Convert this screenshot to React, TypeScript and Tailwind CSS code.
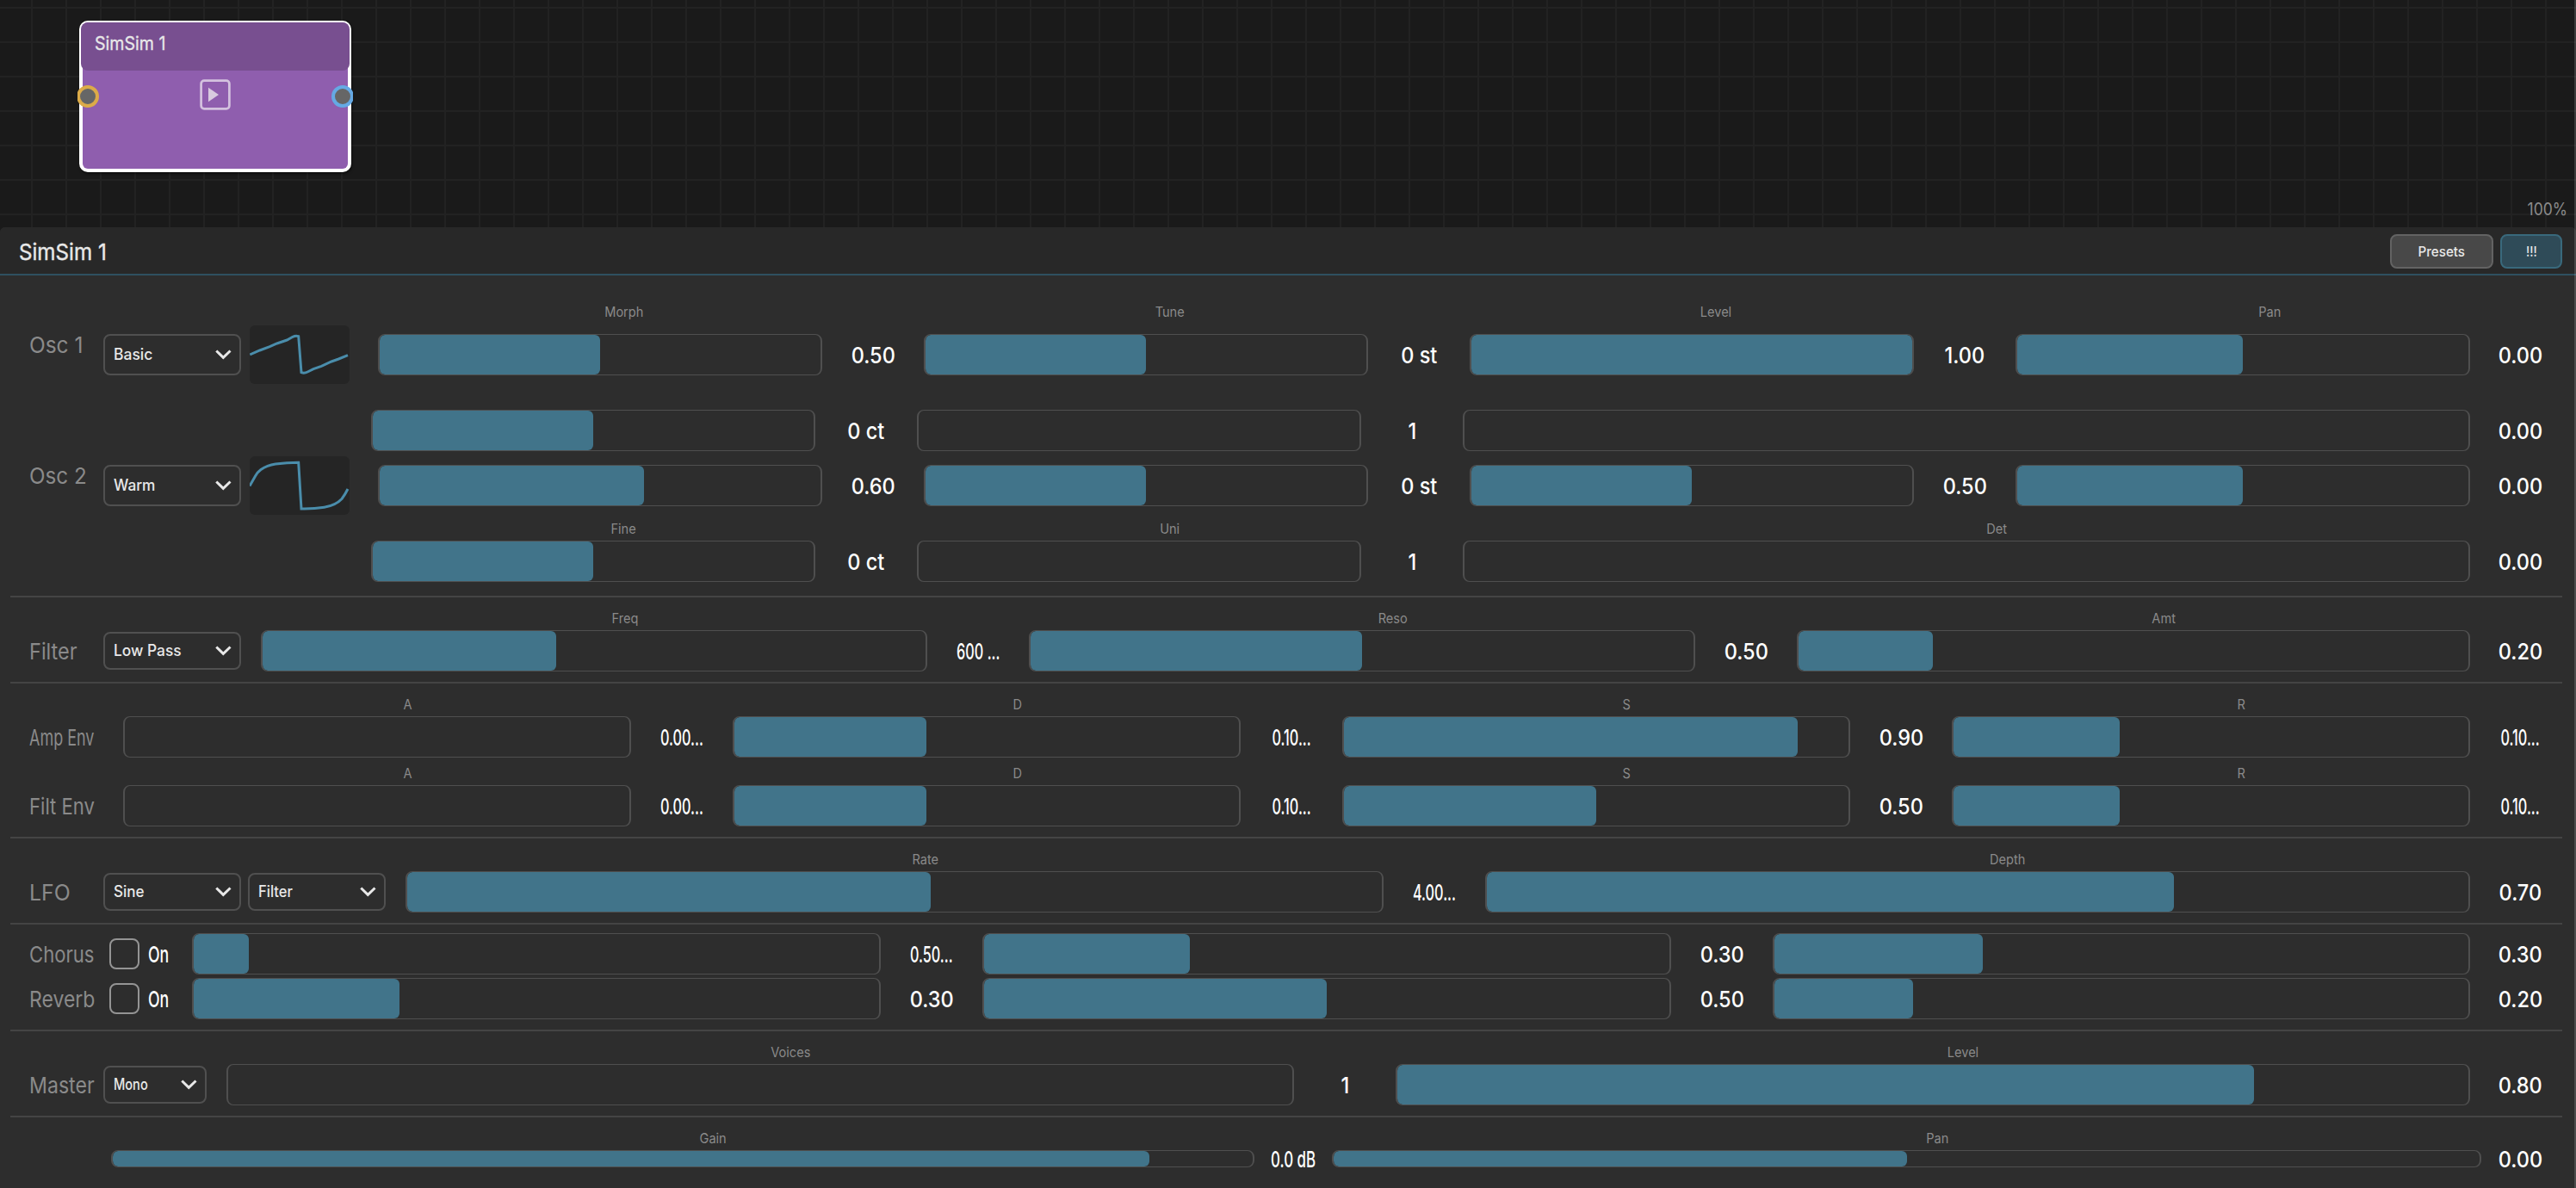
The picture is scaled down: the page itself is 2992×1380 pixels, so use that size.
import React from "react";

type ParamProps = {
  label?: string;
  value: string;
  fill: number;
  // widths of the whole parameter and of its value column
  className: string;
  valueClass?: string;
  textClass?: string;
  labelClass?: string;
  trackClass?: string;
};

function Param({
  label,
  value,
  fill,
  className,
  valueClass = "w-[118px]",
  textClass = "scale-x-[0.905]",
  labelClass = "mb-1 w-[calc(100%-47px)]",
  trackClass = "h-12",
}: ParamProps) {
  return (
    <div className={`flex shrink-0 flex-col justify-end ${className}`}>
      {label && (
        <div className={`text-center text-[16px] leading-5 text-[#8a8a8a] ${labelClass}`}>
          <span className="inline-block scale-x-[0.91]">{label}</span>
        </div>
      )}
      <div className="flex items-center">
        <div className={`flex-1 overflow-hidden rounded-lg border-x-2 border-y border-[#4f4f4f] ${trackClass}`}>
          {fill > 0 && <div className="h-full rounded-md bg-[#41748a]" style={{ width: `${fill * 100}%` }} />}
        </div>
        <div className={`flex justify-center whitespace-nowrap pt-0.5 text-[26px] font-medium leading-[18px] text-white ${valueClass}`}>
          <span className={`inline-block ${textClass}`}>{value}</span>
        </div>
      </div>
    </div>
  );
}

function Select({ text, className, textClass }: { text: string; className: string; textClass: string }) {
  return (
    <div className={`flex shrink-0 items-center justify-between rounded-lg border-2 border-[#505050] pl-[10px] pr-[9px] ${className}`}>
      <span className={`inline-block origin-left whitespace-nowrap text-[18px] font-medium leading-5 text-[#e8e8e8] ${textClass}`}>{text}</span>
      <svg width="19" height="12" viewBox="0 0 19 12" fill="none" className="shrink-0">
        <path d="M1.3 1.5 L9.3 9.3 L17.5 1.5" stroke="#e8e8e8" strokeWidth="3" />
      </svg>
    </div>
  );
}

function Name({ text, className }: { text: string; className: string }) {
  return (
    <div className="w-[86px] shrink-0 whitespace-nowrap pt-0.5 text-[26px] leading-[18px] text-[#8a8a8a]">
      <span className={`inline-block origin-left ${className}`}>{text}</span>
    </div>
  );
}

function Toggle() {
  return (
    <div className="flex items-center pl-[7px]">
      <div className="h-9 w-[35px] rounded-lg border-2 border-[#949494]" />
      <div className="ml-[10px] pt-0.5 text-[26px] font-medium leading-[18px] text-white">
        <span className="inline-block origin-left scale-x-[0.683]">On</span>
      </div>
    </div>
  );
}

function Wave({ d }: { d: string }) {
  return (
    <div className="ml-[10px] h-[68px] w-[116px] shrink-0 rounded-md bg-[#252525]">
      <svg width="116" height="68" viewBox="0 0 116 68" fill="none">
        <path d={d} stroke="#4a8dab" strokeWidth="3" />
      </svg>
    </div>
  );
}

function Row({ height, lead, left, children }: { height: string; lead: string; left?: React.ReactNode; children: React.ReactNode }) {
  return (
    <div className={`flex items-end ${height}`}>
      <div className={`flex h-12 shrink-0 items-center pl-[34px] ${lead}`}>{left}</div>
      {children}
    </div>
  );
}

const Divider = () => <div className="ml-3 mr-4 mt-3 h-0.5 bg-[#444444]" />;

const BASIC =
  "M0.3 34 L11.7 29 L23.3 24.7 L31.7 21 L43.3 17 L50 13.3 Q53.3 11.8 56.7 12.7 L60 54.7 Q63.5 56 67.3 54 L74 50.7 L83.3 47.3 L95 42 L103.3 39 L114 34.7";
const WARM =
  "M0 34.5 L6.7 22.7 Q9.5 18 13 15.5 Q20 10.5 30 9 Q43 7.2 56.7 7.2 L60 61 Q74 61.3 86.7 59.3 Q100 57 107 49.5 Q110.5 45 114 38";

function OscMain({ name, nameClass, wave, shape, shapeClass, morph, level, labels, height }: {
  name: string; nameClass: string; wave: string; shape: string; shapeClass: string; morph: [string, number]; level: [string, number]; labels?: boolean; height: string;
}) {
  const lab = "mb-4 w-[calc(100%-62px)]";
  return (
    <Row
      height={height}
      lead="w-[439px]"
      left={
        <>
          <div className="mb-6"><Name text={name} className={nameClass} /></div>
          <Select text={shape} className="h-12 w-40" textClass={shapeClass} />
          <Wave d={wave} />
        </>
      }
    >
      <Param className="w-[634px]" label={labels ? "Morph" : undefined} labelClass={lab} value={morph[0]} fill={morph[1]} />
      <Param className="w-[634px]" label={labels ? "Tune" : undefined} labelClass={lab} value="0 st" fill={0.5} />
      <Param className="w-[634px]" label={labels ? "Level" : undefined} labelClass={lab} value={level[0]} fill={level[1]} />
      <Param className="w-[645px]" label={labels ? "Pan" : undefined} labelClass="mb-4 w-[calc(100%-54px)]" value="0.00" fill={0.5} valueClass="w-[117px]" />
    </Row>
  );
}

function OscFine({ labels }: { labels?: boolean }) {
  return (
    <Row height="h-[88px]" lead="w-[431px]">
      <Param className="w-[634px]" label={labels ? "Fine" : undefined} value="0 ct" fill={0.5} />
      <Param className="w-[634px]" label={labels ? "Uni" : undefined} value="1" fill={0} />
      <Param className="w-[1287px]" label={labels ? "Det" : undefined} value="0.00" fill={0} valueClass="w-[117px]" />
    </Row>
  );
}

const tight = "scale-x-[0.625]";

function Env({ name, nameClass, height, sustain }: { name: string; nameClass: string; height: string; sustain: [string, number] }) {
  return (
    <Row height={height} lead="w-[143px]" left={<Name text={name} className={nameClass} />}>
      <Param className="w-[708px]" label="A" value="0.00..." fill={0} textClass={tight} />
      <Param className="w-[708px]" label="D" value="0.10..." fill={0.381} textClass={tight} />
      <Param className="w-[708px]" label="S" value={sustain[0]} fill={sustain[1]} />
      <Param className="w-[719px]" label="R" value="0.10..." fill={0.322} textClass={tight} valueClass="w-[117px]" />
    </Row>
  );
}

function Effect({ name, nameClass, height, a, b, c }: {
  name: string; nameClass: string; height: string; a: [string, number, string?]; b: [string, number]; c: [string, number];
}) {
  return (
    <Row height={height} lead="w-[223px]" left={<><Name text={name} className={nameClass} /><Toggle /></>}>
      <Param className="w-[918px]" value={a[0]} fill={a[1]} textClass={a[2]} />
      <Param className="w-[918px]" value={b[0]} fill={b[1]} />
      <Param className="w-[927px]" value={c[0]} fill={c[1]} valueClass="w-[117px]" />
    </Row>
  );
}

function NodeCanvas() {
  return (
    <div className="relative h-[264px] bg-[#1a1a1a] bg-[linear-gradient(#222222_2px,transparent_2px),linear-gradient(90deg,#222222_2px,transparent_2px)] bg-[length:40px_40px] bg-[position:36px_8px]">
      <div className="absolute left-[92px] top-6 h-44 w-[316px] rounded-[10px] border-2 border-white bg-white shadow-[1px_2px_3px_rgba(0,0,0,0.5)]">
        <div className="h-full rounded-lg border-x-2 border-b-2 border-white bg-[#8f5eae]" />
        <div className="absolute inset-x-0 top-0 h-14 rounded-lg bg-[#784f90] pl-4 text-[21px] leading-[50px] text-[#e8e8e8]">
          <span className="inline-block origin-left scale-x-[0.932] [-webkit-text-stroke:0.3px_#e8e8e8]">SimSim 1</span>
        </div>
        <svg className="absolute left-[137px] top-[65px]" width="38" height="38" viewBox="0 0 38 38" fill="none">
          <rect x="2.6" y="2.6" width="32.8" height="32.8" rx="3.6" stroke="#d4c2df" strokeWidth="2.7" />
          <path d="M11 10.7 L23 19 L11 27.2 Z" fill="#d8cadf" />
        </svg>
        <svg className="absolute -left-1 top-[72px]" width="26" height="28" viewBox="0 0 26 28">
          <circle cx="12" cy="14" r="11" fill="#666666" stroke="#dcab48" strokeWidth="4" />
        </svg>
        <svg className="absolute -right-1 top-[72px]" width="26" height="28" viewBox="0 0 26 28">
          <circle cx="14" cy="14" r="11" fill="#666666" stroke="#65a9e4" strokeWidth="4" />
        </svg>
      </div>
      <div className="absolute right-2.5 top-[233px] text-[20px] leading-5 text-[#8a8a8a]">
        <span className="inline-block origin-right scale-x-[0.876]">100%</span>
      </div>
    </div>
  );
}

export default function App() {
  return (
    <div className="relative h-[1380px] w-[2992px] overflow-hidden bg-[#1a1a1a] font-['Inter',sans-serif]">
      <NodeCanvas />
      <div className="h-[1116px] overflow-hidden rounded-t-md bg-[#2d2d2d]">
        <div className="flex h-14 items-start justify-between border-b-2 border-[#2f5060] bg-[#282828] pl-[22px] pr-4">
          <div className="text-[26px] leading-[57px] text-[#e8e8e8]">
            <span className="inline-block origin-left scale-x-[0.93] [-webkit-text-stroke:0.4px_#e8e8e8]">SimSim 1</span>
          </div>
          <div className="flex gap-2 pt-2 text-[16px] font-medium leading-9 text-[#e8e8e8]">
            <div className="h-10 w-[120px] rounded-lg border-2 border-[#636363] bg-[#484848] text-center">
              <span className="inline-block scale-x-[0.949]">Presets</span>
            </div>
            <div className="h-10 w-[72px] rounded-lg border-2 border-[#39697c] bg-[#2f4b58] text-center">
              <span className="inline-block scale-x-[0.864]">!!!</span>
            </div>
          </div>
        </div>

        <OscMain height="h-[116px]" name="Osc 1" nameClass="scale-x-[0.941]" shape="Basic" shapeClass="scale-x-[0.972]" wave={BASIC} morph={["0.50", 0.5]} level={["1.00", 1]} labels />
        <OscFine />
        <OscMain height="h-16" name="Osc 2" nameClass="scale-x-[0.931]" shape="Warm" shapeClass="scale-x-[0.959]" wave={WARM} morph={["0.60", 0.6]} level={["0.50", 0.5]} />
        <OscFine labels />
        <div className="h-1" />
        <Divider />

        <Row
          height="h-[86px]"
          lead="w-[303px]"
          left={<><Name text="Filter" className="scale-x-[0.904]" /><Select text="Low Pass" className="h-11 w-40" textClass="scale-x-[0.964]" /></>}
        >
          <Param className="w-[892px]" label="Freq" value="600 ..." fill={0.443} textClass={tight} />
          <Param className="w-[892px]" label="Reso" value="0.50" fill={0.5} />
          <Param className="w-[899px]" label="Amt" value="0.20" fill={0.2} valueClass="w-[117px]" />
        </Row>
        <Divider />

        <Env height="h-[86px]" name="Amp Env" nameClass="scale-x-[0.691]" sustain={["0.90", 0.9]} />
        <Env height="h-20" name="Filt Env" nameClass="scale-x-[0.85]" sustain={["0.50", 0.5]} />
        <Divider />

        <Row
          height="h-[86px]"
          lead="w-[471px]"
          left={
            <>
              <Name text="LFO" className="scale-x-[0.956]" />
              <Select text="Sine" className="h-11 w-40" textClass="scale-x-[0.946]" />
              <Select text="Filter" className="ml-2 h-11 w-40" textClass="scale-x-[0.918]" />
            </>
          }
        >
          <Param className="w-[1254px]" label="Rate" value="4.00..." fill={0.537} textClass={tight} />
          <Param className="w-[1261px]" label="Depth" value="0.70" fill={0.7} valueClass="w-[117px]" />
        </Row>
        <Divider />

        <Effect height="h-[58px]" name="Chorus" nameClass="scale-x-[0.85]" a={["0.50...", 0.08, tight]} b={["0.30", 0.3]} c={["0.30", 0.3]} />
        <Effect height="h-[52px]" name="Reverb" nameClass="scale-x-[0.885]" a={["0.30", 0.3]} b={["0.50", 0.5]} c={["0.20", 0.2]} />
        <Divider />

        <Row
          height="h-[86px]"
          lead="w-[263px]"
          left={<><Name text="Master" className="scale-x-[0.89]" /><Select text="Mono" className="h-11 w-[120px]" textClass="scale-x-[0.81]" /></>}
        >
          <Param className="w-[1358px]" label="Voices" value="1" fill={0} />
          <Param className="w-[1365px]" label="Level" value="0.80" fill={0.8} valueClass="w-[117px]" />
        </Row>
        <Divider />

        <div className="flex h-[58px] items-end pl-[129px]">
          <Param className="w-[1418px]" label="Gain" labelClass="mb-1 w-[calc(100%-19px)]" value="0.0 dB" fill={0.909} textClass="scale-x-[0.65]" valueClass="w-[90px]" trackClass="h-5" />
          <Param className="w-[1425px]" label="Pan" labelClass="mb-1 w-[calc(100%-19px)]" value="0.00" fill={0.5} valueClass="w-[90px]" trackClass="h-5" />
        </div>
      </div>
      <div className="absolute inset-y-0 right-0 w-0.5 bg-white/15" />
    </div>
  );
}
